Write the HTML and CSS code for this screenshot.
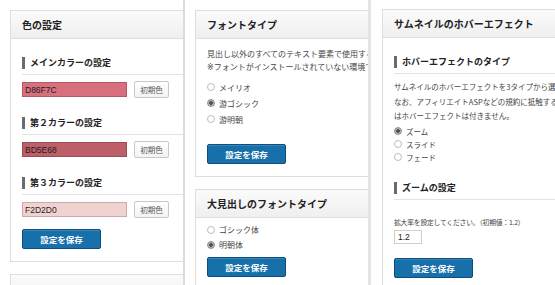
FILE: index.html
```html
<!doctype html>
<html lang="ja">
<head>
  <meta charset="UTF-8">
  <meta name="viewport" content="width=device-width, initial-scale=1">
  <title>テーマ設定</title>
  <link rel="stylesheet" href="styles.css">
</head>
<body>
<div class="shots">

  <div class="shot shot-colors">
    <div class="card">
      <div class="card-head">色の設定</div>
      <div class="card-body">
        <div class="subhead"><span>メインカラーの設定</span></div>
        <div class="color-row">
          <input class="color-input" value="D86F7C" style="background:#D86F7C">
          <button class="btn-default">初期色</button>
        </div>
        <div class="subhead"><span>第２カラーの設定</span></div>
        <div class="color-row">
          <input class="color-input" value="BD5E68" style="background:#BD5E68">
          <button class="btn-default">初期色</button>
        </div>
        <div class="subhead"><span>第３カラーの設定</span></div>
        <div class="color-row">
          <input class="color-input" value="F2D2D0" style="background:#F2D2D0">
          <button class="btn-default">初期色</button>
        </div>
        <button class="btn-save">設定を保存</button>
      </div>
    </div>
    <div class="card">
      <div class="card-head"></div>
    </div>
  </div>

  <div class="shot shot-fonts">
    <div class="card">
      <div class="card-head">フォントタイプ</div>
      <div class="card-body">
        <p class="note">見出し以外のすべてのテキスト要素で使用するフォントを選択してください。<br><span class="mark">※</span>フォントがインストールされていない環境では代替フォントで表示されます。</p>
        <ul class="radios">
          <li><span class="radio"></span>メイリオ</li>
          <li><span class="radio checked"></span>游ゴシック</li>
          <li><span class="radio"></span>游明朝</li>
        </ul>
        <button class="btn-save">設定を保存</button>
      </div>
    </div>
    <div class="card">
      <div class="card-head">大見出しのフォントタイプ</div>
      <div class="card-body">
        <ul class="radios radios-tight">
          <li><span class="radio"></span>ゴシック体</li>
          <li><span class="radio checked"></span>明朝体</li>
        </ul>
        <button class="btn-save">設定を保存</button>
      </div>
    </div>
  </div>

  <div class="shot shot-hover">
    <div class="card">
      <div class="card-head">サムネイルのホバーエフェクト</div>
      <div class="card-body">
        <div class="subhead"><span>ホバーエフェクトのタイプ</span></div>
        <p class="note note-small">サムネイルのホバーエフェクトを3タイプから選択できます。<br>なお、アフィリエイトASPなどの規約に抵触する場合があるため、広告画像に<br>はホバーエフェクトは付きません。</p>
        <ul class="radios radios-small">
          <li><span class="radio checked"></span>ズーム</li>
          <li><span class="radio"></span>スライド</li>
          <li><span class="radio"></span>フェード</li>
        </ul>
        <div class="subhead subhead-zoom"><span>ズームの設定</span></div>
        <p class="note note-small note-zoom">拡大率を設定してください。（初期値：1.2）</p>
        <input class="num-input" value="1.2">
        <button class="btn-save btn-save-zoom">設定を保存</button>
      </div>
    </div>
  </div>

</div>
</body>
</html>
```

FILE: styles.css
```css
* {
  box-sizing: border-box;
}
body {
  margin: 0;
  background: #fff;
  font-family: "Noto Sans CJK JP", "Liberation Sans", sans-serif;
  color: #333;
}
.shots {
  display: flex;
  height: 285px;
  overflow: hidden;
}
.shot {
  flex: none;
  overflow: hidden;
  padding-top: 10px;
  padding-left: 10px;
}
.shot-colors {
  width: 185px;
  border-right: 2px solid #dcdcdc;
}
.shot-fonts {
  width: 186px;
  border-right: 3px solid #e3e3e3;
}
.shot-hover {
  width: 184px;
  padding-top: 9px;
  padding-left: 11px;
}
.card {
  width: 330px;
  border: 1px solid #dedede;
  background: #fff;
  margin-bottom: 12px;
}
.card-head {
  height: 28px;
  line-height: 27px;
  padding-left: 11px;
  border-bottom: 1px solid #dedede;
  background: linear-gradient(#fbfbfb, #efefef);
  font-size: 10px;
  font-weight: bold;
  color: #222;
}
.card-body {
  padding: 0 11px 12px;
}
.subhead {
  margin-top: 18px;
  padding-bottom: 5px;
  border-bottom: 1px solid #e2e2e2;
}
.subhead span {
  display: block;
  border-left: 3px solid #6a6a72;
  padding-left: 5px;
  font-size: 9px;
  font-weight: bold;
  line-height: 12px;
  color: #222;
}
.color-row {
  display: flex;
  align-items: center;
  gap: 7px;
  height: 17px;
  margin-top: 6px;
  margin-bottom: 19px;
}
.color-row + .subhead {
  margin-top: 0;
}
.color-input {
  width: 105px;
  height: 15px;
  padding: 0 2px;
  border: 1px solid rgba(0, 0, 0, 0.18);
  font-family: "Liberation Sans", sans-serif;
  font-size: 8.5px;
  color: #222;
}
.btn-default {
  width: 35px;
  height: 17px;
  padding: 0;
  border: 1px solid #c8c8c8;
  border-radius: 2px;
  background: linear-gradient(#fff, #f3f3f3);
  font-family: inherit;
  font-size: 7.5px;
  color: #555;
}
.btn-save {
  display: block;
  width: 79px;
  height: 20px;
  margin-top: 11px;
  padding: 0;
  border: 1px solid #0c4f7e;
  border-radius: 2px;
  background: #1870ab;
  font-family: inherit;
  font-size: 8.5px;
  font-weight: bold;
  color: #fff;
  box-shadow: inset 0 1px 0 rgba(255, 255, 255, 0.15);
}
.color-row:last-of-type {
  margin-bottom: 0;
}
.note {
  margin: 8px 0 0;
  font-size: 8px;
  line-height: 13px;
  color: #444;
  white-space: nowrap;
}
.mark {
  font-family: "DejaVu Sans", sans-serif;
  font-variant-emoji: text;
  color: #444;
}
.note-small {
  margin-top: 6px;
  font-size: 7.5px;
  line-height: 14.5px;
}
.radios {
  list-style: none;
  margin: 5px 0 0;
  padding: 0;
}
.radios li {
  display: flex;
  align-items: center;
  gap: 4px;
  height: 16px;
  font-size: 8px;
  color: #444;
}
.radios-tight {
  margin-top: 4px;
}
.radios-tight li {
  height: 15px;
}
.radios-small {
  margin-top: 1px;
}
.radios-small li {
  height: 13px;
  font-size: 7.5px;
}
.radio {
  width: 8px;
  height: 8px;
  border: 1px solid #bdbdbd;
  border-radius: 50%;
  background: #fff;
}
.radio.checked {
  border-color: #8e8e8e;
  background: radial-gradient(circle, #555 0 1.6px, #b4b4b4 2px);
}
.shot-fonts .card:first-child .btn-save {
  margin-top: 17px;
}
.shot-fonts .card:last-child .btn-save {
  margin-top: 5px;
}
.subhead-zoom {
  margin-top: 18px;
}
.note-zoom {
  margin-top: 15px;
  line-height: 14px;
  font-size: 6.8px;
  letter-spacing: -0.2px;
}
.num-input {
  display: block;
  width: 28px;
  height: 14px;
  margin-top: 1px;
  padding: 0 3px;
  border: 1px solid #cfcfcf;
  font-family: "Liberation Sans", sans-serif;
  font-size: 8.5px;
  color: #222;
}
.btn-save-zoom {
  margin-top: 14px;
}
```
